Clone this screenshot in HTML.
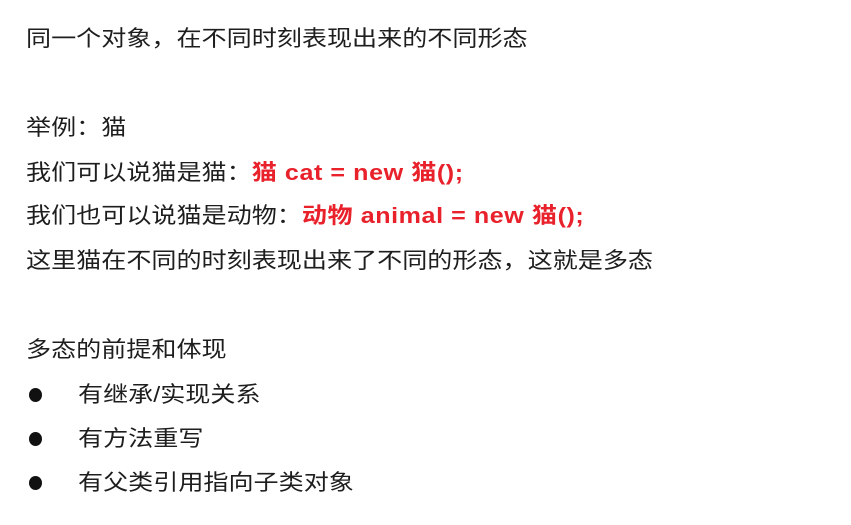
<!DOCTYPE html>
<html><head><meta charset="utf-8"><style>
body{margin:0;width:851px;height:525px;background:#fff;overflow:hidden;font-family:"Liberation Sans","Noto Sans CJK SC",sans-serif;color:#1e1e1e;font-size:22px}
.l{position:absolute;left:26px;line-height:24px;white-space:nowrap;transform:scaleX(1.14);transform-origin:0 50%}
.r{color:#e8212b;font-weight:bold;letter-spacing:0.5px}
.b{position:absolute;left:29px;width:13px;height:14px;border-radius:50%;background:#111}
</style></head><body>
<div class="l" style="top:27px">同一个对象，在不同时刻表现出来的不同形态</div>
<div class="l" style="top:116px">举例：猫</div>
<div class="l" style="top:161px">我们可以说猫是猫：<span class="r">猫 cat = new 猫();</span></div>
<div class="l" style="top:204px">我们也可以说猫是动物：<span class="r">动物 animal = new 猫();</span></div>
<div class="l" style="top:249px">这里猫在不同的时刻表现出来了不同的形态，这就是多态</div>
<div class="l" style="top:338px">多态的前提和体现</div>
<div class="b" style="top:388px"></div><div class="l" style="top:383px;left:78px">有继承/实现关系</div>
<div class="b" style="top:432px"></div><div class="l" style="top:427px;left:78px">有方法重写</div>
<div class="b" style="top:476px"></div><div class="l" style="top:471px;left:78px">有父类引用指向子类对象</div>
</body></html>
